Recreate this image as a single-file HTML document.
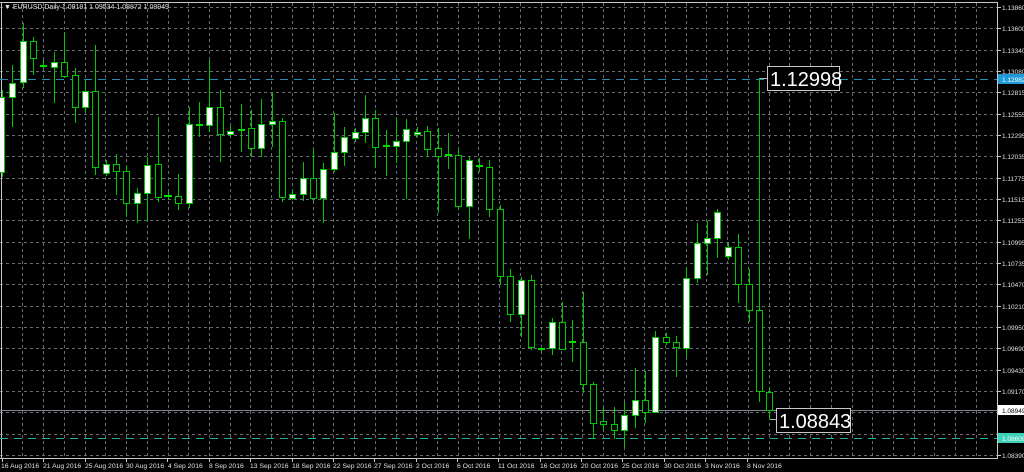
<!DOCTYPE html>
<html><head><meta charset="utf-8"><style>
html,body{margin:0;padding:0;background:#000;width:1024px;height:472px;overflow:hidden}
svg{display:block}
text{font-family:"Liberation Sans",sans-serif}
</style></head><body>
<svg width="1024" height="472" viewBox="0 0 1024 472" xmlns="http://www.w3.org/2000/svg">
<rect width="1024" height="472" fill="#000"/>
<g stroke="#676c74" stroke-width="1" stroke-dasharray="3,3">
<path d="M0 7.5H997M0 28.5H997M0 50.5H997M0 71.5H997M0 92.5H997M0 114.5H997M0 135.5H997M0 156.5H997M0 178.5H997M0 199.5H997M0 220.5H997M0 242.5H997M0 263.5H997M0 284.5H997M0 306.5H997M0 327.5H997M0 348.5H997M0 370.5H997M0 391.5H997M0 412.5H997M0 434.5H997M0 455.5H997"/>
<path d="M22.5 3V458M43.5 3V458M64.5 3V458M85.5 3V458M105.5 3V458M126.5 3V458M147.5 3V458M168.5 3V458M188.5 3V458M209.5 3V458M230.5 3V458M250.5 3V458M271.5 3V458M292.5 3V458M313.5 3V458M333.5 3V458M354.5 3V458M375.5 3V458M396.5 3V458M416.5 3V458M437.5 3V458M458.5 3V458M478.5 3V458M499.5 3V458M520.5 3V458M541.5 3V458M561.5 3V458M582.5 3V458M603.5 3V458M624.5 3V458M644.5 3V458M665.5 3V458M686.5 3V458M706.5 3V458M727.5 3V458M748.5 3V458M769.5 3V458M789.5 3V458M810.5 3V458M831.5 3V458M852.5 3V458M872.5 3V458M893.5 3V458M914.5 3V458M934.5 3V458M955.5 3V458M976.5 3V458"/>
</g>
<path d="M997.5 2V459M0 2.5H998M0 458.5H998M1.5 2V458" stroke="#c8c8c8" stroke-width="1" fill="none"/>
<path d="M0 79.5H997" stroke="#1e8fb0" stroke-dasharray="8,6"/>
<path d="M0 410.5H997" stroke="#80868f"/>
<path d="M0 438.5H997" stroke="#1fb0a0" stroke-dasharray="8,6"/>
<path stroke="#00c800" stroke-width="1" fill="none" d="M2.5 90V177M12.5 65V127M23.5 23V88M33.5 37V75M43.5 60V69M54.5 52V103M64.5 32V78M75.5 68V123M85.5 80V112M95.5 45V175M106.5 160V176M116.5 154V195M126.5 166V217M137.5 188V223M147.5 157V222M158.5 117V202M168.5 192V200M178.5 174V210M189.5 107V208M199.5 102V137M209.5 60V132M220.5 90V162M230.5 126V136M241.5 104V152M251.5 110V157M261.5 99V157M272.5 92V147M282.5 118V202M292.5 190V200M303.5 162V201M313.5 149V201M323.5 163V223M334.5 113V172M344.5 127V166M355.5 128V142M365.5 95V143M375.5 110V168M386.5 130V176M396.5 118V163M406.5 119V199M417.5 127V137M427.5 126V157M438.5 128V213M448.5 133V169M458.5 150V210M469.5 156V239M479.5 158V172M489.5 160V217M500.5 205V285M510.5 269V322M521.5 277V337M531.5 275V350M541.5 347V351M552.5 318V355M562.5 302V349M572.5 320V362M583.5 292V393M593.5 382V439M603.5 407V430M614.5 407V439M624.5 402V447M635.5 368V428M645.5 371V423M655.5 331V412M666.5 333V345M676.5 336V377M686.5 267V357M697.5 223V283M707.5 221V275M717.5 209V258M728.5 243V260M738.5 234V303M749.5 269V322M759.5 78V402M769.5 388V419"/>
<path stroke="#00e000" stroke-width="2" d="M40 66H47M164 196H172M196 125H203M238 130H245M383 146H390M445 155H452M476 166H483M538 349H545M569 342H576"/>
<g fill="#000" stroke="#00c800" stroke-width="1">
<rect x="30.5" y="41.5" width="6" height="17"/>
<rect x="61.5" y="62.5" width="6" height="14"/>
<rect x="72.5" y="75.5" width="6" height="32"/>
<rect x="92.5" y="91.5" width="6" height="76"/>
<rect x="113.5" y="164.5" width="6" height="7"/>
<rect x="123.5" y="171.5" width="6" height="32"/>
<rect x="155.5" y="164.5" width="6" height="33"/>
<rect x="175.5" y="196.5" width="6" height="7"/>
<rect x="217.5" y="107.5" width="6" height="27"/>
<rect x="248.5" y="128.5" width="6" height="20"/>
<rect x="279.5" y="121.5" width="6" height="76"/>
<rect x="310.5" y="178.5" width="6" height="20"/>
<rect x="372.5" y="118.5" width="6" height="29"/>
<rect x="424.5" y="131.5" width="6" height="18"/>
<rect x="435.5" y="148.5" width="6" height="8"/>
<rect x="455.5" y="155.5" width="6" height="51"/>
<rect x="486.5" y="167.5" width="6" height="42"/>
<rect x="497.5" y="209.5" width="6" height="67"/>
<rect x="507.5" y="276.5" width="6" height="38"/>
<rect x="528.5" y="280.5" width="6" height="67"/>
<rect x="559.5" y="322.5" width="6" height="27"/>
<rect x="580.5" y="342.5" width="6" height="42"/>
<rect x="590.5" y="384.5" width="6" height="39"/>
<rect x="600.5" y="421.5" width="6" height="3"/>
<rect x="611.5" y="424.5" width="6" height="6"/>
<rect x="642.5" y="400.5" width="6" height="12"/>
<rect x="663.5" y="337.5" width="6" height="5"/>
<rect x="673.5" y="342.5" width="6" height="5"/>
<rect x="735.5" y="247.5" width="6" height="37"/>
<rect x="746.5" y="284.5" width="6" height="26"/>
<rect x="756.5" y="310.5" width="6" height="81"/>
<rect x="766.5" y="392.5" width="6" height="18"/>
</g>
<g fill="#fff" stroke="#00c800" stroke-width="1">
<rect x="-1.5" y="97.5" width="6" height="75"/>
<rect x="9.5" y="83.5" width="6" height="14"/>
<rect x="20.5" y="41.5" width="6" height="41"/>
<rect x="51.5" y="62.5" width="6" height="5"/>
<rect x="82.5" y="91.5" width="6" height="16"/>
<rect x="103.5" y="164.5" width="6" height="9"/>
<rect x="134.5" y="193.5" width="6" height="10"/>
<rect x="144.5" y="165.5" width="6" height="28"/>
<rect x="186.5" y="124.5" width="6" height="79"/>
<rect x="206.5" y="107.5" width="6" height="18"/>
<rect x="227.5" y="131.5" width="6" height="3"/>
<rect x="258.5" y="124.5" width="6" height="24"/>
<rect x="269.5" y="121.5" width="6" height="3"/>
<rect x="289.5" y="194.5" width="6" height="4"/>
<rect x="300.5" y="178.5" width="6" height="16"/>
<rect x="320.5" y="169.5" width="6" height="29"/>
<rect x="331.5" y="152.5" width="6" height="17"/>
<rect x="341.5" y="137.5" width="6" height="15"/>
<rect x="352.5" y="132.5" width="6" height="6"/>
<rect x="362.5" y="118.5" width="6" height="14"/>
<rect x="393.5" y="141.5" width="6" height="5"/>
<rect x="403.5" y="129.5" width="6" height="12"/>
<rect x="414.5" y="132.5" width="6" height="2"/>
<rect x="466.5" y="160.5" width="6" height="46"/>
<rect x="518.5" y="280.5" width="6" height="34"/>
<rect x="549.5" y="322.5" width="6" height="26"/>
<rect x="621.5" y="415.5" width="6" height="15"/>
<rect x="632.5" y="400.5" width="6" height="15"/>
<rect x="652.5" y="337.5" width="6" height="75"/>
<rect x="683.5" y="278.5" width="6" height="70"/>
<rect x="694.5" y="243.5" width="6" height="35"/>
<rect x="704.5" y="238.5" width="6" height="5"/>
<rect x="714.5" y="212.5" width="6" height="26"/>
<rect x="725.5" y="247.5" width="6" height="9"/>
</g>
<path d="M759.5 78.5H767M770 419.5H776" stroke="#b0b0b0"/>
<rect x="767.5" y="66.5" width="72" height="24" fill="#000" stroke="#c8c8c8"/>
<text x="770" y="86" font-size="20" fill="#fff">1.12998</text>
<rect x="776.5" y="408.5" width="74" height="24" fill="#000" stroke="#c8c8c8"/>
<text x="779" y="428" font-size="20" fill="#fff">1.08843</text>
<text x="4" y="9" font-size="7" fill="#e0e0e0">▼ EURUSD,Daily  1.09191 1.09534 1.08872 1.08949</text>
<g stroke="#c8c8c8"><path d="M997 7.5H1001M997 28.5H1001M997 50.5H1001M997 71.5H1001M997 92.5H1001M997 114.5H1001M997 135.5H1001M997 156.5H1001M997 178.5H1001M997 199.5H1001M997 220.5H1001M997 242.5H1001M997 263.5H1001M997 284.5H1001M997 306.5H1001M997 327.5H1001M997 348.5H1001M997 370.5H1001M997 391.5H1001M997 412.5H1001M997 434.5H1001M997 455.5H1001"/></g>
<g font-size="6.5" fill="#e0e0e0">
<text x="1002" y="10">1.13860</text><text x="1002" y="31">1.13600</text><text x="1002" y="53">1.13340</text><text x="1002" y="74">1.13080</text><text x="1002" y="95">1.12815</text><text x="1002" y="117">1.12555</text><text x="1002" y="138">1.12295</text><text x="1002" y="159">1.12035</text><text x="1002" y="181">1.11775</text><text x="1002" y="202">1.11515</text><text x="1002" y="223">1.11255</text><text x="1002" y="245">1.10995</text><text x="1002" y="266">1.10735</text><text x="1002" y="287">1.10470</text><text x="1002" y="309">1.10210</text><text x="1002" y="330">1.09950</text><text x="1002" y="351">1.09690</text><text x="1002" y="373">1.09430</text><text x="1002" y="394">1.09170</text><text x="1002" y="458">1.08390</text>
</g>
<rect x="998" y="74" width="26" height="10" fill="#1e9ad6"/>
<text x="1002" y="82" font-size="6.5" fill="#fff">1.12982</text>
<rect x="998" y="405" width="26" height="10" fill="#fff"/>
<text x="1002" y="413" font-size="6.5" fill="#000">1.08949</text>
<rect x="998" y="433" width="26" height="10" fill="#3fd0b8"/>
<text x="1002" y="441" font-size="6.5" fill="#fff">1.08609</text>
<g stroke="#c8c8c8"><path d="M2.5 458V462M43.5 458V462M85.5 458V462M126.5 458V462M167.5 458V462M209.5 458V462M250.5 458V462M292.5 458V462M333.5 458V462M374.5 458V462M416.5 458V462M457.5 458V462M498.5 458V462M540.5 458V462M581.5 458V462M622.5 458V462M664.5 458V462M705.5 458V462M747.5 458V462"/></g>
<g font-size="6.8" fill="#e0e0e0">
<text x="1" y="468">16 Aug 2016</text><text x="43" y="468">21 Aug 2016</text><text x="85" y="468">25 Aug 2016</text><text x="126" y="468">30 Aug 2016</text><text x="168" y="468">4 Sep 2016</text><text x="209" y="468">8 Sep 2016</text><text x="250" y="468">13 Sep 2016</text><text x="292" y="468">18 Sep 2016</text><text x="333" y="468">22 Sep 2016</text><text x="374" y="468">27 Sep 2016</text><text x="416" y="468">2 Oct 2016</text><text x="457" y="468">6 Oct 2016</text><text x="498" y="468">11 Oct 2016</text><text x="540" y="468">16 Oct 2016</text><text x="581" y="468">20 Oct 2016</text><text x="622" y="468">25 Oct 2016</text><text x="664" y="468">30 Oct 2016</text><text x="705" y="468">3 Nov 2016</text><text x="747" y="468">8 Nov 2016</text>
</g>
</svg>
</body></html>
